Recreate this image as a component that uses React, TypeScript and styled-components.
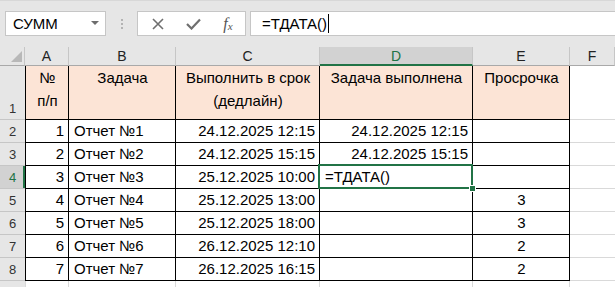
import styled, { createGlobalStyle, css } from "styled-components";

const GlobalStyle = createGlobalStyle`
  html, body {
    margin: 0;
    padding: 0;
    background: #ffffff;
  }
`;

const GREEN = "#217346";
const HEAD_BG = "#e6e6e6";
const HEAD_SEL = "#d2d2d2";
const HEAD_LINE = "#c6c6c6";
const GRID_LINE = "#d9d9d9";

type Align = "left" | "right" | "center";

interface Row {
  num: string;
  task: string;
  due: string;
  done: string;
  late: string;
}

const rows: Row[] = [
  { num: "1", task: "Отчет №1", due: "24.12.2025 12:15", done: "24.12.2025 12:15", late: "" },
  { num: "2", task: "Отчет №2", due: "24.12.2025 15:15", done: "24.12.2025 15:15", late: "" },
  { num: "3", task: "Отчет №3", due: "25.12.2025 10:00", done: "=ТДАТА()", late: "" },
  { num: "4", task: "Отчет №4", due: "25.12.2025 13:00", done: "", late: "3" },
  { num: "5", task: "Отчет №5", due: "25.12.2025 18:00", done: "", late: "3" },
  { num: "6", task: "Отчет №6", due: "26.12.2025 12:10", done: "", late: "2" },
  { num: "7", task: "Отчет №7", due: "26.12.2025 16:15", done: "", late: "2" },
];

const headers: string[][] = [
  ["№", "п/п"],
  ["Задача"],
  ["Выполнить в срок", "(дедлайн)"],
  ["Задача выполнена"],
  ["Просрочка"],
];

const columns = ["A", "B", "C", "D", "E", "F"];
const ACTIVE_COL = "D";
const ACTIVE_ROW = 4;

export default function App() {
  return (
    <>
      <GlobalStyle />
      <Window>
        <FormulaBar>
          <NameBox>
            <span>СУММ</span>
            <DropArrow />
          </NameBox>
          <Grip>
            <i />
            <i />
            <i />
          </Grip>
          <ActionBox>
            <ActionIcon>
              <svg width="12" height="12" viewBox="0 0 12 12">
                <path d="M1 1 L11 11 M11 1 L1 11" stroke="#6f6f6f" strokeWidth="1.6" fill="none" />
              </svg>
            </ActionIcon>
            <ActionIcon>
              <svg width="15" height="12" viewBox="0 0 15 12">
                <path d="M1 6 L5.5 10.5 L14 1.5" stroke="#6f6f6f" strokeWidth="2.2" fill="none" />
              </svg>
            </ActionIcon>
            <ActionIcon>
              <Fx>
                f<sub>x</sub>
              </Fx>
            </ActionIcon>
          </ActionBox>
          <FormulaInput>
            <span>=ТДАТА()</span>
            <Caret />
          </FormulaInput>
        </FormulaBar>

        <Sheet>
          <Corner>
            <CornerMark />
          </Corner>
          {columns.map((c) => (
            <ColHead key={c} $selected={c === ACTIVE_COL}>
              {c}
            </ColHead>
          ))}

          <RowHead $tall>1</RowHead>
          {headers.map((lines, i) => (
            <Cell key={i} $head $edge="table" $first={i === 0} $align="center">
              <div>
                {lines.map((l) => (
                  <div key={l}>{l}</div>
                ))}
              </div>
            </Cell>
          ))}
          <Cell $edge="grid" $last />

          {rows.map((r, i) => {
            const rowNo = i + 2;
            const active = rowNo === ACTIVE_ROW;
            return [
              <RowHead key={`h${rowNo}`} $selected={active}>
                {rowNo}
              </RowHead>,
              <Cell key={`a${rowNo}`} $edge="table" $first $align="right">
                {r.num}
              </Cell>,
              <Cell key={`b${rowNo}`} $edge="table" $align="left">
                {r.task}
              </Cell>,
              <Cell key={`c${rowNo}`} $edge="table" $align="right">
                {r.due}
              </Cell>,
              <Cell key={`d${rowNo}`} $edge="table" $align={active ? "left" : "right"} $active={active}>
                {r.done}
              </Cell>,
              <Cell key={`e${rowNo}`} $edge="table" $align="center">
                {r.late}
              </Cell>,
              <Cell key={`f${rowNo}`} $edge="grid" $last />,
            ];
          })}

          {/* row 9 only peeks in at the bottom edge */}
          <RowHead />
          {columns.map((c, i) => (
            <Cell key={`9${c}`} $edge="grid" $firstGrid={i === 0} $last={c === "F"} />
          ))}
        </Sheet>
      </Window>
    </>
  );
}

const Window = styled.div`
  width: 615px;
  height: 287px;
  overflow: hidden;
  background: ${HEAD_BG};
  font-family: "Liberation Sans", Arial, sans-serif;
`;

const FormulaBar = styled.div`
  height: 47px;
  box-sizing: border-box;
  border-top: 1px solid #d8d8d8;
  padding: 10px 0 11px 5px;
  display: flex;
  align-items: stretch;
`;

const NameBox = styled.div`
  width: 101px;
  box-sizing: border-box;
  background: #fff;
  border: 1px solid ${HEAD_LINE};
  padding: 0 6px 0 7px;
  display: flex;
  align-items: center;
  justify-content: space-between;
  font-size: 15px;
  color: #000;
`;

const DropArrow = styled.span`
  width: 0;
  height: 0;
  border-left: 4px solid transparent;
  border-right: 4px solid transparent;
  border-top: 4px solid #6d6d6d;
  margin-top: -2px;
`;

const Grip = styled.div`
  width: 31px;
  display: flex;
  flex-direction: column;
  align-items: center;
  justify-content: center;
  gap: 2px;

  i {
    display: block;
    width: 2px;
    height: 2px;
    background: #b3b3b3;
  }
`;

const ActionBox = styled.div`
  width: 109px;
  box-sizing: border-box;
  background: #fff;
  border: 1px solid ${HEAD_LINE};
  display: flex;
  align-items: center;
  justify-content: space-between;
  padding: 0 9px 0 12px;
`;

const ActionIcon = styled.span`
  display: flex;
  align-items: center;
  justify-content: center;
  width: 16px;
`;

const Fx = styled.span`
  font-family: "Liberation Serif", "Times New Roman", serif;
  font-style: italic;
  font-size: 16px;
  color: #555;

  sub {
    font-size: 11px;
    vertical-align: -1px;
  }
`;

const FormulaInput = styled.div`
  flex: 1;
  margin-left: 4px;
  background: #fff;
  border: 1px solid ${HEAD_LINE};
  border-right: none;
  display: flex;
  align-items: center;
  padding-left: 11px;
  font-size: 15px;
  color: #000;
`;

const Caret = styled.span`
  display: inline-block;
  width: 1px;
  height: 19px;
  background: #000;
  margin-left: 1px;
`;

const Sheet = styled.div`
  display: grid;
  grid-template-columns: 25px 44px 107px 144px 153px 97px 1fr;
  grid-template-rows: 19px 54px repeat(7, 23px) 23px;
  background: #fff;
`;

const headBase = css`
  box-sizing: border-box;
  background: ${HEAD_BG};
  color: #222;
  font-size: 14px;
  display: flex;
  justify-content: center;
`;

const Corner = styled.div`
  ${headBase};
  border-right: 1px solid ${HEAD_LINE};
  border-bottom: 1px solid #a9a9a9;
  align-items: flex-end;
  justify-content: flex-end;
  padding: 0 2px 3px 0;
`;

const CornerMark = styled.div`
  width: 11px;
  height: 11px;
  background: #b8b8b8;
  clip-path: polygon(100% 0, 100% 100%, 0 100%);
`;

const ColHead = styled.div<{ $selected?: boolean }>`
  ${headBase};
  align-items: center;
  border-right: 1px solid ${HEAD_LINE};
  border-bottom: 1px solid #a9a9a9;
  ${(p) =>
    p.$selected &&
    css`
      background: ${HEAD_SEL};
      color: ${GREEN};
      border-bottom: 2px solid ${GREEN};
    `}
`;

const RowHead = styled.div<{ $selected?: boolean; $tall?: boolean }>`
  ${headBase};
  font-size: 13px;
  color: #333;
  align-items: ${(p) => (p.$tall ? "flex-end" : "center")};
  padding-bottom: ${(p) => (p.$tall ? "3px" : "0")};
  border-bottom: 1px solid ${HEAD_LINE};
  ${(p) =>
    p.$selected &&
    css`
      background: ${HEAD_SEL};
      color: ${GREEN};
      box-shadow: inset -2px 0 0 ${GREEN};
    `}
`;

const Cell = styled.div<{
  $align?: Align;
  $head?: boolean;
  $edge: "table" | "grid";
  $first?: boolean;
  $firstGrid?: boolean;
  $last?: boolean;
  $active?: boolean;
}>`
  box-sizing: border-box;
  min-width: 0;
  white-space: nowrap;
  font-size: 15px;
  color: #000;
  padding: 0 4px 0 5px;
  line-height: 22px;
  display: flex;
  align-items: center;
  justify-content: ${(p) =>
    p.$align === "right" ? "flex-end" : p.$align === "center" ? "center" : "flex-start"};
  border-bottom: 1px solid ${(p) => (p.$edge === "table" ? "#000" : GRID_LINE)};
  border-right: ${(p) =>
    p.$last ? "none" : `1px solid ${p.$edge === "table" ? "#000" : GRID_LINE}`};
  ${(p) => p.$first && "border-left: 1px solid #000;"}
  ${(p) => p.$firstGrid && `border-left: 1px solid ${GRID_LINE};`}

  ${(p) =>
    p.$head &&
    css`
      background: #fce4d6;
      align-items: flex-start;
      text-align: center;
      line-height: 23px;
      padding-top: 0;
    `}

  ${(p) =>
    p.$active &&
    css`
      position: relative;
      z-index: 1;

      &::before {
        content: "";
        position: absolute;
        top: -2px;
        left: -2px;
        right: -1px;
        bottom: -1px;
        border: 2px solid ${GREEN};
        pointer-events: none;
      }

      &::after {
        content: "";
        position: absolute;
        right: -4px;
        bottom: -4px;
        width: 5px;
        height: 5px;
        background: ${GREEN};
        border: 1px solid #fff;
      }
    `}
`;
